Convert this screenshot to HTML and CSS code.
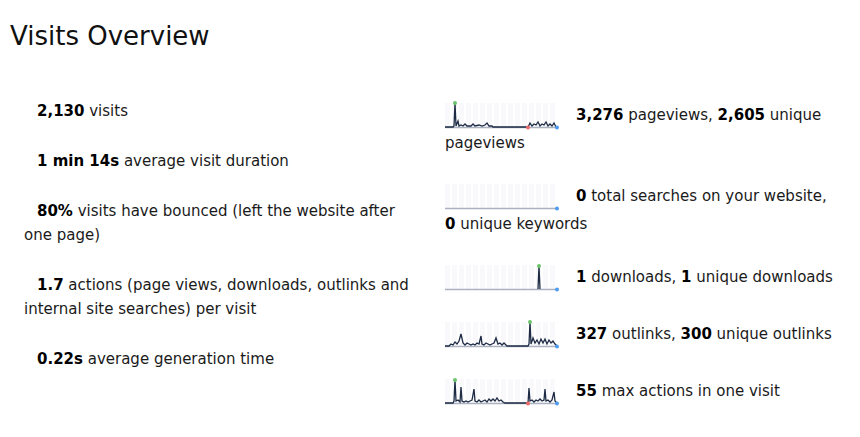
FILE: index.html
```html
<!DOCTYPE html>
<html>
<head>
<meta charset="utf-8">
<link rel="stylesheet" href="styles.css">
</head>
<body>
<h2 class="title">Visits Overview</h2>
<div class="cols">
  <div class="col col-left">
    <div class="item"><strong>2,130</strong> visits</div>
    <div class="item"><strong>1 min 14s</strong> average visit duration</div>
    <div class="item"><strong>80%</strong> visits have bounced (left the website after one page)</div>
    <div class="item"><strong>1.7</strong> actions (page views, downloads, outlinks and internal site searches) per visit</div>
    <div class="item"><strong>0.22s</strong> average generation time</div>
  </div>
  <div class="col col-right">
    <div class="item"><svg class="spark" width="115" height="31" viewBox="0 0 115 31">
        <g class="grid"><rect x="0" y="3" width="5" height="24"/><rect x="7" y="3" width="5" height="24"/><rect x="14" y="3" width="5" height="24"/><rect x="21" y="3" width="5" height="24"/><rect x="28" y="3" width="5" height="24"/><rect x="35" y="3" width="5" height="24"/><rect x="42" y="3" width="5" height="24"/><rect x="49" y="3" width="5" height="24"/><rect x="56" y="3" width="5" height="24"/><rect x="63" y="3" width="5" height="24"/><rect x="70" y="3" width="5" height="24"/><rect x="77" y="3" width="5" height="24"/><rect x="84" y="3" width="5" height="24"/><rect x="91" y="3" width="5" height="24"/><rect x="98" y="3" width="5" height="24"/><rect x="105" y="3" width="5" height="24"/></g>
        <line class="base" x1="0" y1="27.5" x2="112" y2="27.5"/>
        <polyline class="ln" points="0,27 8,27 9,26 10,3 11,26 13,21 14,26 16,25 18,26 20,24 22,26 26,26 28,24 30,26 34,25 37,26 40,25 42,23 44,26 47,26 48,27 83,27 85,23 87,26 89,24 91,25 93,22 95,26 97,24 99,25 101,22 103,26 105,24 107,26 109,23 111,27"/>
        <circle class="max" cx="10" cy="3" r="2"/><circle class="min" cx="83" cy="27.5" r="2"/><circle class="end" cx="112" cy="27.5" r="2"/>
      </svg><strong>3,276</strong> pageviews, <strong>2,605</strong> unique pageviews</div>
    <div class="item"><svg class="spark" width="115" height="31" viewBox="0 0 115 31">
        <g class="grid"><rect x="0" y="3" width="5" height="24"/><rect x="7" y="3" width="5" height="24"/><rect x="14" y="3" width="5" height="24"/><rect x="21" y="3" width="5" height="24"/><rect x="28" y="3" width="5" height="24"/><rect x="35" y="3" width="5" height="24"/><rect x="42" y="3" width="5" height="24"/><rect x="49" y="3" width="5" height="24"/><rect x="56" y="3" width="5" height="24"/><rect x="63" y="3" width="5" height="24"/><rect x="70" y="3" width="5" height="24"/><rect x="77" y="3" width="5" height="24"/><rect x="84" y="3" width="5" height="24"/><rect x="91" y="3" width="5" height="24"/><rect x="98" y="3" width="5" height="24"/><rect x="105" y="3" width="5" height="24"/></g>
        <line class="base" x1="0" y1="27.5" x2="112" y2="27.5"/>
        <circle class="end" cx="112" cy="27.5" r="2"/>
      </svg><strong>0</strong> total searches on your website, <strong>0</strong> unique keywords</div>
    <div class="item"><svg class="spark" width="115" height="31" viewBox="0 0 115 31">
        <g class="grid"><rect x="0" y="3" width="5" height="24"/><rect x="7" y="3" width="5" height="24"/><rect x="14" y="3" width="5" height="24"/><rect x="21" y="3" width="5" height="24"/><rect x="28" y="3" width="5" height="24"/><rect x="35" y="3" width="5" height="24"/><rect x="42" y="3" width="5" height="24"/><rect x="49" y="3" width="5" height="24"/><rect x="56" y="3" width="5" height="24"/><rect x="63" y="3" width="5" height="24"/><rect x="70" y="3" width="5" height="24"/><rect x="77" y="3" width="5" height="24"/><rect x="84" y="3" width="5" height="24"/><rect x="91" y="3" width="5" height="24"/><rect x="98" y="3" width="5" height="24"/><rect x="105" y="3" width="5" height="24"/></g>
        <line class="base" x1="0" y1="27.5" x2="112" y2="27.5"/>
        <polyline class="ln" points="93,27 94,4 95,27"/>
        <circle class="max" cx="94" cy="4" r="2"/><circle class="end" cx="112" cy="27.5" r="2"/>
      </svg><strong>1</strong> downloads, <strong>1</strong> unique downloads</div>
    <div class="item"><svg class="spark" width="115" height="31" viewBox="0 0 115 31">
        <g class="grid"><rect x="0" y="3" width="5" height="24"/><rect x="7" y="3" width="5" height="24"/><rect x="14" y="3" width="5" height="24"/><rect x="21" y="3" width="5" height="24"/><rect x="28" y="3" width="5" height="24"/><rect x="35" y="3" width="5" height="24"/><rect x="42" y="3" width="5" height="24"/><rect x="49" y="3" width="5" height="24"/><rect x="56" y="3" width="5" height="24"/><rect x="63" y="3" width="5" height="24"/><rect x="70" y="3" width="5" height="24"/><rect x="77" y="3" width="5" height="24"/><rect x="84" y="3" width="5" height="24"/><rect x="91" y="3" width="5" height="24"/><rect x="98" y="3" width="5" height="24"/><rect x="105" y="3" width="5" height="24"/></g>
        <line class="base" x1="0" y1="27.5" x2="112" y2="27.5"/>
        <polyline class="ln" points="0,27 4,27 6,25 8,26 10,23 12,25 14,22 16,15 18,24 20,26 22,24 24,25 26,26 28,25 30,26 32,24 34,25 35,21 36,17 37,25 39,26 41,24 43,25 45,26 47,25 49,24 51,19 53,25 55,24 57,26 59,24 61,26 62,27 83,27 84,25 85,3 86,25 88,19 90,24 92,21 94,25 96,20 98,24 100,20 102,25 104,21 106,24 108,22 110,25 112,27"/>
        <circle class="max" cx="85" cy="3" r="2"/><circle class="end" cx="112" cy="27.5" r="2"/>
      </svg><strong>327</strong> outlinks, <strong>300</strong> unique outlinks</div>
    <div class="item"><svg class="spark" width="115" height="31" viewBox="0 0 115 31">
        <g class="grid"><rect x="0" y="3" width="5" height="24"/><rect x="7" y="3" width="5" height="24"/><rect x="14" y="3" width="5" height="24"/><rect x="21" y="3" width="5" height="24"/><rect x="28" y="3" width="5" height="24"/><rect x="35" y="3" width="5" height="24"/><rect x="42" y="3" width="5" height="24"/><rect x="49" y="3" width="5" height="24"/><rect x="56" y="3" width="5" height="24"/><rect x="63" y="3" width="5" height="24"/><rect x="70" y="3" width="5" height="24"/><rect x="77" y="3" width="5" height="24"/><rect x="84" y="3" width="5" height="24"/><rect x="91" y="3" width="5" height="24"/><rect x="98" y="3" width="5" height="24"/><rect x="105" y="3" width="5" height="24"/></g>
        <line class="base" x1="0" y1="27.5" x2="112" y2="27.5"/>
        <polyline class="ln" points="0,27 8,27 9,25 10,4 11,25 13,24 15,26 16,11 17,25 19,26 21,25 23,26 25,25 27,24 29,13 30,25 32,26 34,24 36,26 38,25 40,24 42,26 44,23 46,25 48,23 50,25 52,22 54,25 56,24 58,26 60,27 83,27 84,12 85,25 87,24 89,26 91,24 93,25 95,23 97,25 99,24 100,13 101,25 103,24 105,26 107,24 109,16 110,25 112,27"/>
        <circle class="max" cx="10" cy="4" r="2"/><circle class="min" cx="83" cy="27.5" r="2"/><circle class="end" cx="112" cy="27.5" r="2"/>
      </svg><strong>55</strong> max actions in one visit</div>
  </div>
</div>
</body>
</html>
```
FILE: styles.css
```css
html, body {
  margin: 0;
  padding: 0;
  background: #ffffff;
}
body {
  font-family: "DejaVu Sans", "Open Sans", sans-serif;
  font-size: 15px;
  color: #1a1a1a;
}
.title {
  margin: 0;
  padding: 16px 0 0 10px;
  font-size: 26px;
  font-weight: normal;
  line-height: 40px;
  color: #111;
}
.cols {
  display: flex;
  margin-top: 30px;
}
.col-left {
  width: 396px;
  margin-left: 24px;
}
.col-right {
  width: 393px;
  margin-left: 25px;
  padding-top: 1px;
}
.item {
  padding: 13px 0;
  line-height: 24px;
}
.col-left .item {
  text-indent: 13px;
}
strong {
  font-weight: bold;
  color: #000;
}
.spark {
  vertical-align: middle;
  margin-right: 16px;
}
.grid rect {
  fill: #f9f9fb;
}
.base {
  stroke: #aab2c2;
  stroke-width: 1.5;
}
.ln {
  fill: none;
  stroke: #1d2b44;
  stroke-width: 1.3;
}
.max { fill: #6cc46c; }
.min { fill: #f06a6a; }
.end { fill: #4d9cf0; }
```
